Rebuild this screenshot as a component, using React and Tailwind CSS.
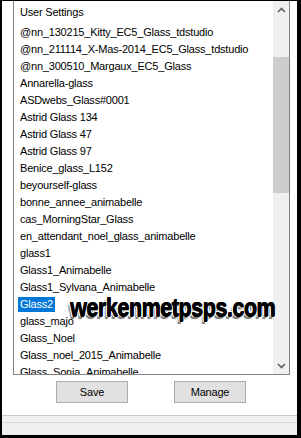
import React from "react";

const items = [
  "@nn_130215_Kitty_EC5_Glass_tdstudio",
  "@nn_211114_X-Mas-2014_EC5_Glass_tdstudio",
  "@nn_300510_Margaux_EC5_Glass",
  "Annarella-glass",
  "ASDwebs_Glass#0001",
  "Astrid Glass 134",
  "Astrid Glass 47",
  "Astrid Glass 97",
  "Benice_glass_L152",
  "beyourself-glass",
  "bonne_annee_animabelle",
  "cas_MorningStar_Glass",
  "en_attendant_noel_glass_animabelle",
  "glass1",
  "Glass1_Animabelle",
  "Glass1_Sylvana_Animabelle",
  "Glass2",
  "glass_majo",
  "Glass_Noel",
  "Glass_noel_2015_Animabelle",
  "Glass_Sonia_Animabelle",
];

function Chevron({ up }) {
  return (
    <svg width="9" height="6" viewBox="0 0 9 6">
      <path
        d={up ? "M1 5 L4.5 1.5 L8 5" : "M1 1 L4.5 4.5 L8 1"}
        fill="none"
        stroke="#606060"
        strokeWidth="1.6"
      />
    </svg>
  );
}

export default function App() {
  return (
    <div
      className="w-[301px] h-[438px] bg-white border-black border-l-2 border-t border-r-4 border-b-[3px] flex flex-col text-black text-[11px] tracking-[-0.2px]"
      style={{ fontFamily: '"Liberation Sans", Arial, sans-serif' }}
    >
      {/* listbox */}
      <div className="ml-[11px] mr-[7px] h-[374px] border-l border-r border-b border-[#828282] flex relative shrink-0">
        <div className="flex-1 overflow-hidden flex flex-col">
          <div className="h-[23px] flex items-center pl-[6px] shrink-0">User Settings</div>
          {items.map((t) => (
            <div key={t} className="h-[17px] flex items-center pl-[4px] shrink-0 whitespace-nowrap">
              {t === "Glass2" ? (
                <span className="px-[2px] leading-[15px] bg-[#0078d7] text-white">{t}</span>
              ) : (
                <span className="px-[2px] leading-[15px]">{t}</span>
              )}
            </div>
          ))}
        </div>
        {/* scrollbar */}
        <div className="w-[16px] bg-[#f0f0f0] flex flex-col shrink-0">
          <div className="h-[17px] flex items-center justify-center shrink-0">
            <Chevron up />
          </div>
          <div className="flex-1 relative">
            <div className="absolute left-0 right-0 top-[39px] h-[136px] bg-[#cdcdcd]" />
          </div>
          <div className="h-[17px] flex items-center justify-center shrink-0">
            <Chevron />
          </div>
        </div>
        {/* watermark */}
        <div
          className="absolute left-[56px] top-[291px] text-[26px] font-bold leading-[30px] tracking-[-0.6px] origin-left scale-x-[0.83] whitespace-nowrap text-black [text-shadow:0.7px_0_0_#000,0_0.5px_0_#000,1.5px_1px_0_#fff,-1.5px_-1px_0_#fff,1.5px_-1px_0_#fff,-1.5px_1px_0_#fff,-2.5px_2.5px_1px_#777]"
        >
          werkenmetpsps.com
        </div>
      </div>
      {/* buttons */}
      <div className="mt-[6px] h-[22px] flex pl-[54px] gap-[46px] shrink-0">
        <div className="w-[72px] h-[22px] bg-[#e1e1e1] border border-[#adadad] flex items-center justify-center">Save</div>
        <div className="w-[72px] h-[22px] bg-[#e1e1e1] border border-[#adadad] flex items-center justify-center">Manage</div>
      </div>
      <div className="h-[12px] shrink-0" />
      {/* status area */}
      <div className="flex-1 border-t border-[#c8c8c8] bg-[#f0f0f0] flex flex-col">
        <div className="h-[6px] shrink-0" />
        <div className="border-t border-[#dadada] flex-1" />
      </div>
    </div>
  );
}
